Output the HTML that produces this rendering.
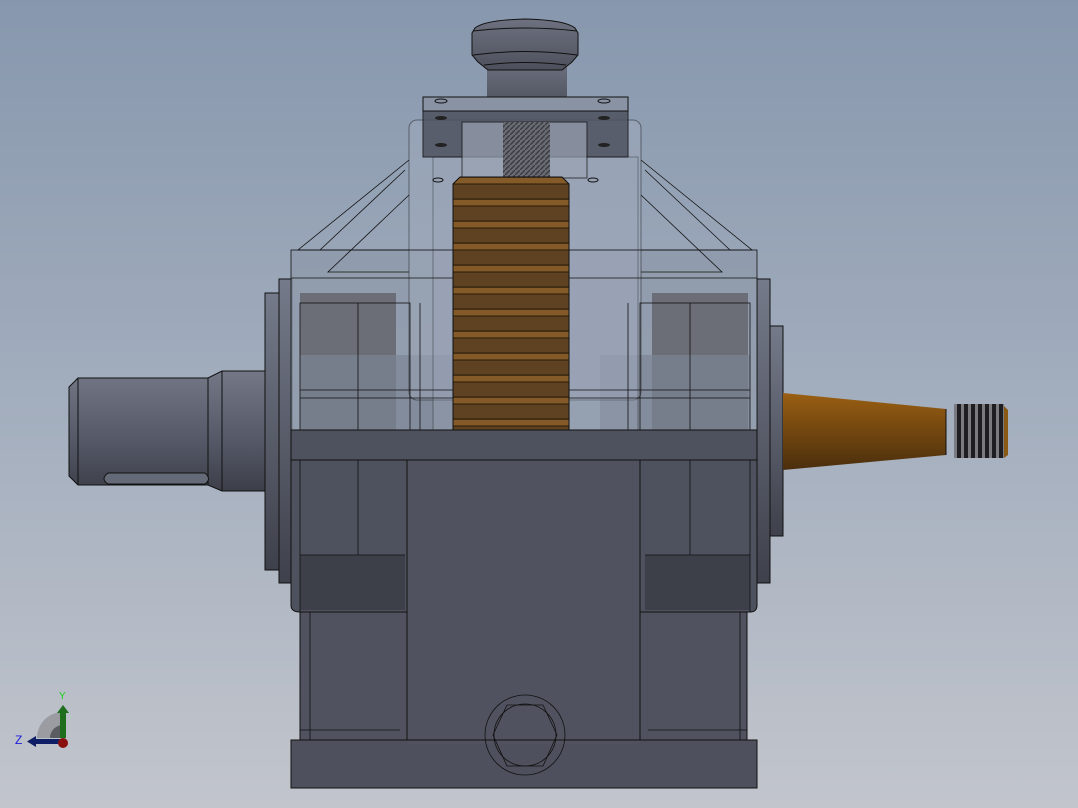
<!DOCTYPE html>
<html><head><meta charset="utf-8"><style>
html,body{margin:0;padding:0;width:1078px;height:808px;overflow:hidden}
svg{display:block}
</style></head><body>
<svg width="1078" height="808" viewBox="0 0 1078 808" xmlns="http://www.w3.org/2000/svg" font-family="Liberation Sans, sans-serif">
<defs>
<linearGradient id="bg" x1="0" y1="0" x2="0" y2="1"><stop offset="0" stop-color="#8797ad"/><stop offset="0.5" stop-color="#a3aebe"/><stop offset="1" stop-color="#c2c5cc"/></linearGradient>
<linearGradient id="shaft" x1="0" y1="0" x2="0" y2="1"><stop offset="0" stop-color="#737786"/><stop offset="0.6" stop-color="#545866"/><stop offset="1" stop-color="#3c3f49"/></linearGradient>
<linearGradient id="flange" x1="0" y1="0" x2="0" y2="1"><stop offset="0" stop-color="#757a8a"/><stop offset="1" stop-color="#3e414b"/></linearGradient>
<linearGradient id="orange" x1="0" y1="0" x2="0" y2="1"><stop offset="0" stop-color="#9a5f12"/><stop offset="1" stop-color="#4a2e0d"/></linearGradient>
<linearGradient id="cap" x1="0" y1="0" x2="0" y2="1"><stop offset="0" stop-color="#6e7280"/><stop offset="1" stop-color="#4d505c"/></linearGradient>
<pattern id="thr" width="7" height="10" patternUnits="userSpaceOnUse"><rect width="7" height="10" fill="#1e1e22"/><rect x="2" width="3" height="10" fill="#7a7a80"/></pattern>
<pattern id="worm" width="5" height="5" patternUnits="userSpaceOnUse"><rect width="5" height="5" fill="#6a6c74"/><path d="M0 5L5 0" stroke="#3a3c42" stroke-width="1.5"/></pattern>
<pattern id="gear" width="10" height="22" patternUnits="userSpaceOnUse" y="178"><rect width="10" height="22" fill="#5e4221"/><rect y="0" width="10" height="6" fill="#845b28"/><line x1="0" y1="6" x2="10" y2="6" stroke="#2a1a08" stroke-width="1"/><line x1="0" y1="21" x2="10" y2="21" stroke="#2a1a08" stroke-width="1"/></pattern>
</defs>
<rect width="1078" height="808" fill="url(#bg)"/>

<!-- left shaft -->
<path d="M78 378H208L222 371H265V491H222L208 485H78L69 476V387Z" fill="url(#shaft)" stroke="#111" stroke-width="1"/>
<line x1="78" y1="378" x2="78" y2="485" stroke="#111"/>
<line x1="208" y1="378" x2="208" y2="485" stroke="#111"/>
<line x1="222" y1="371" x2="222" y2="491" stroke="#111"/>
<path d="M108 473H205Q212 479 205 484H108Q100 479 108 473Z" fill="#656a78" stroke="#111"/>
<!-- left flange -->
<rect x="265" y="293" width="14" height="277" fill="url(#flange)" stroke="#111"/>
<rect x="279" y="279" width="13" height="304" fill="url(#flange)" stroke="#111"/>
<!-- right flange -->
<rect x="757" y="279" width="13" height="304" fill="url(#flange)" stroke="#111"/>
<rect x="770" y="326" width="13" height="210" fill="url(#flange)" stroke="#111"/>
<!-- right shaft cone -->
<path d="M783 393L946 409V455L783 470Z" fill="url(#orange)"/>
<line x1="946" y1="409" x2="946" y2="455" stroke="#111"/>
<rect x="954" y="404" width="50" height="54" fill="url(#thr)"/>
<path d="M1004 406L1008 410V455L1004 458Z" fill="#8a5a15"/>

<!-- housing translucent upper -->
<rect x="291" y="250" width="466" height="180" fill="#8e98aa" opacity="0.75"/>
<rect x="300" y="293" width="96" height="138" fill="#6b6e76"/>
<rect x="652" y="293" width="96" height="138" fill="#6b6e76"/>
<rect x="300" y="355" width="156" height="76" fill="#7c8494" opacity="0.7"/>
<rect x="600" y="355" width="150" height="76" fill="#7c8494" opacity="0.7"/>
<!-- central tower -->
<rect x="409" y="120" width="232" height="280" rx="8" fill="#a0aabb" opacity="0.45" stroke="#111"/>
<rect x="433" y="157" width="205" height="275" fill="#9aa4b6" opacity="0.35" stroke="#111"/>
<!-- ribs -->
<g stroke="#111" fill="none" stroke-width="0.8">
<path d="M409 160L298 250H409"/><path d="M405 170L320 250"/><path d="M409 195L328 272H409"/>
<path d="M641 160L752 250H641"/><path d="M645 170L730 250"/><path d="M641 195L722 272H641"/>
<rect x="291" y="250" width="466" height="180"/>
<line x1="291" y1="278" x2="757" y2="278"/>
<rect x="300" y="303" width="110" height="128"/><rect x="640" y="303" width="110" height="128"/>
<line x1="300" y1="398" x2="750" y2="398"/><line x1="300" y1="390" x2="750" y2="390"/>
<line x1="358" y1="303" x2="358" y2="431"/><line x1="690" y1="303" x2="690" y2="431"/>
<line x1="420" y1="303" x2="420" y2="431"/><line x1="628" y1="303" x2="628" y2="431"/>
</g>

<!-- cap / knob -->
<path d="M487 60H567V108H487Z" fill="url(#cap)"/>
<path d="M475 28Q485 20 525 19Q565 20 575 28L578 33V55L572 62L562 70H488L478 62L472 55V33Z" fill="url(#cap)" stroke="#111"/>
<path d="M473 31Q525 25 577 31M473 55Q525 48 577 55M484 65Q525 60 566 65" stroke="#111" fill="none"/>
<!-- plate -->
<rect x="423" y="97" width="205" height="14" fill="#8a93a4" stroke="#111"/>
<rect x="423" y="111" width="205" height="46" fill="#4e525e" opacity="0.85" stroke="#111"/>
<rect x="462" y="122" width="125" height="56" fill="#9aa3b4" opacity="0.7" stroke="#111"/>
<rect x="503" y="122" width="47" height="56" fill="url(#worm)"/>
<g fill="#222"><ellipse cx="441" cy="118" rx="6" ry="2"/><ellipse cx="604" cy="118" rx="6" ry="2"/><ellipse cx="441" cy="145" rx="6" ry="2"/><ellipse cx="604" cy="145" rx="6" ry="2"/></g>
<g fill="none" stroke="#111"><ellipse cx="441" cy="101" rx="6" ry="2"/><ellipse cx="604" cy="101" rx="6" ry="2"/><ellipse cx="438" cy="180" rx="5" ry="2"/><ellipse cx="593" cy="180" rx="5" ry="2"/></g>

<!-- gear -->
<path d="M460 177H562L569 184V430H453V184Z" fill="url(#gear)" stroke="#111"/>

<!-- lower body -->
<rect x="291" y="430" width="466" height="30" fill="#4e525e" stroke="#111"/>
<path d="M291 460H757V605Q757 612 750 612H300Q291 612 291 605Z" fill="#4e525e" stroke="#111"/>
<rect x="300" y="555" width="105" height="55" fill="#3d4049"/>
<rect x="645" y="555" width="105" height="55" fill="#3d4049"/>
<rect x="300" y="612" width="107" height="130" fill="#50535f" stroke="#111"/>
<rect x="640" y="612" width="107" height="130" fill="#50535f" stroke="#111"/>
<rect x="407" y="460" width="233" height="290" fill="#50535f" stroke="#111"/>
<rect x="291" y="740" width="466" height="48" fill="#4e515d" stroke="#111"/>
<rect x="408" y="741" width="231" height="3" fill="#50535f"/>
<g stroke="#111" fill="none" stroke-width="0.8">
<line x1="358" y1="460" x2="358" y2="555"/><line x1="690" y1="460" x2="690" y2="555"/>
<line x1="300" y1="460" x2="300" y2="612"/><line x1="750" y1="460" x2="750" y2="612"/>
<line x1="300" y1="555" x2="405" y2="555"/><line x1="645" y1="555" x2="750" y2="555"/>
<line x1="310" y1="612" x2="310" y2="740"/><line x1="740" y1="612" x2="740" y2="740"/>
<line x1="300" y1="730" x2="400" y2="730"/><line x1="648" y1="730" x2="747" y2="730"/>
<circle cx="525" cy="735" r="40"/><circle cx="525" cy="735" r="31"/>
<path d="M507 705H543L557 735L543 766H507L493 735Z"/>
</g>

<!-- triad -->
<path d="M37 738A26 26 0 0 1 63 712V738Z" fill="#9a9ca2"/>
<path d="M50 738A13 13 0 0 1 63 725V738Z" fill="#5a5c62"/>
<rect x="60" y="712" width="6" height="26" fill="#1e6e1e"/>
<path d="M57 713L63 705L69 713Z" fill="#1e6e1e"/>
<rect x="35" y="739" width="28" height="5" fill="#0f1c66"/>
<path d="M36 736L27 741.5L36 747Z" fill="#0f1c66"/>
<circle cx="63" cy="743" r="5" fill="#8a1010"/>
<text x="59" y="699" font-size="10" fill="#1bd01b">Y</text>
<text x="15" y="744" font-size="12" fill="#1b1bdd">Z</text>
</svg>
</body></html>
